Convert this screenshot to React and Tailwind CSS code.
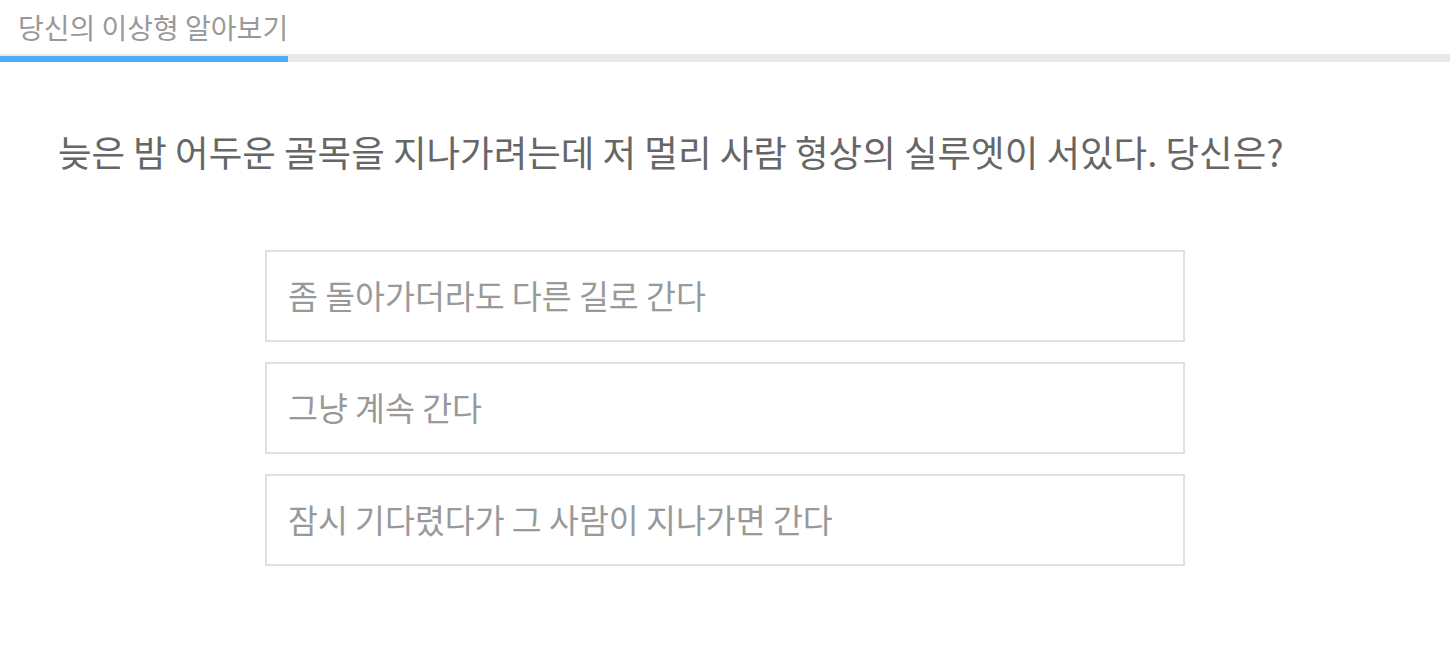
import React from 'react';

const OPTIONS = [
  '좀 돌아가더라도 다른 길로 간다',
  '그냥 계속 간다',
  '잠시 기다렸다가 그 사람이 지나가면 간다',
];

export default function App() {
  return (
    <div className="min-h-screen bg-white font-['Noto_Sans_CJK_KR',sans-serif]">
      <div className="h-[54px] flex items-center pl-[18px]">
        <h1 className="text-[28px] leading-none text-[#999]">당신의 이상형 알아보기</h1>
      </div>
      <div className="h-[8px] bg-[#e8e8e8] flex flex-col justify-end">
        <div className="h-[6px] w-[288px] bg-[#4fadf4]" />
      </div>

      <p className="mt-[72px] pl-[58px] text-[36.5px] leading-none text-[#666]">
        늦은 밤 어두운 골목을 지나가려는데 저 멀리 사람 형상의 실루엣이 서있다. 당신은?
      </p>

      <div className="mt-[79px] w-[920px] ml-[265px] flex flex-col gap-[20px]">
        {OPTIONS.map((opt) => (
          <button
            key={opt}
            className="h-[92px] w-full border-2 border-[#e0e0e0] bg-white text-left px-[21px] text-[32.5px] text-[#999]"
          >
            {opt}
          </button>
        ))}
      </div>
    </div>
  );
}
